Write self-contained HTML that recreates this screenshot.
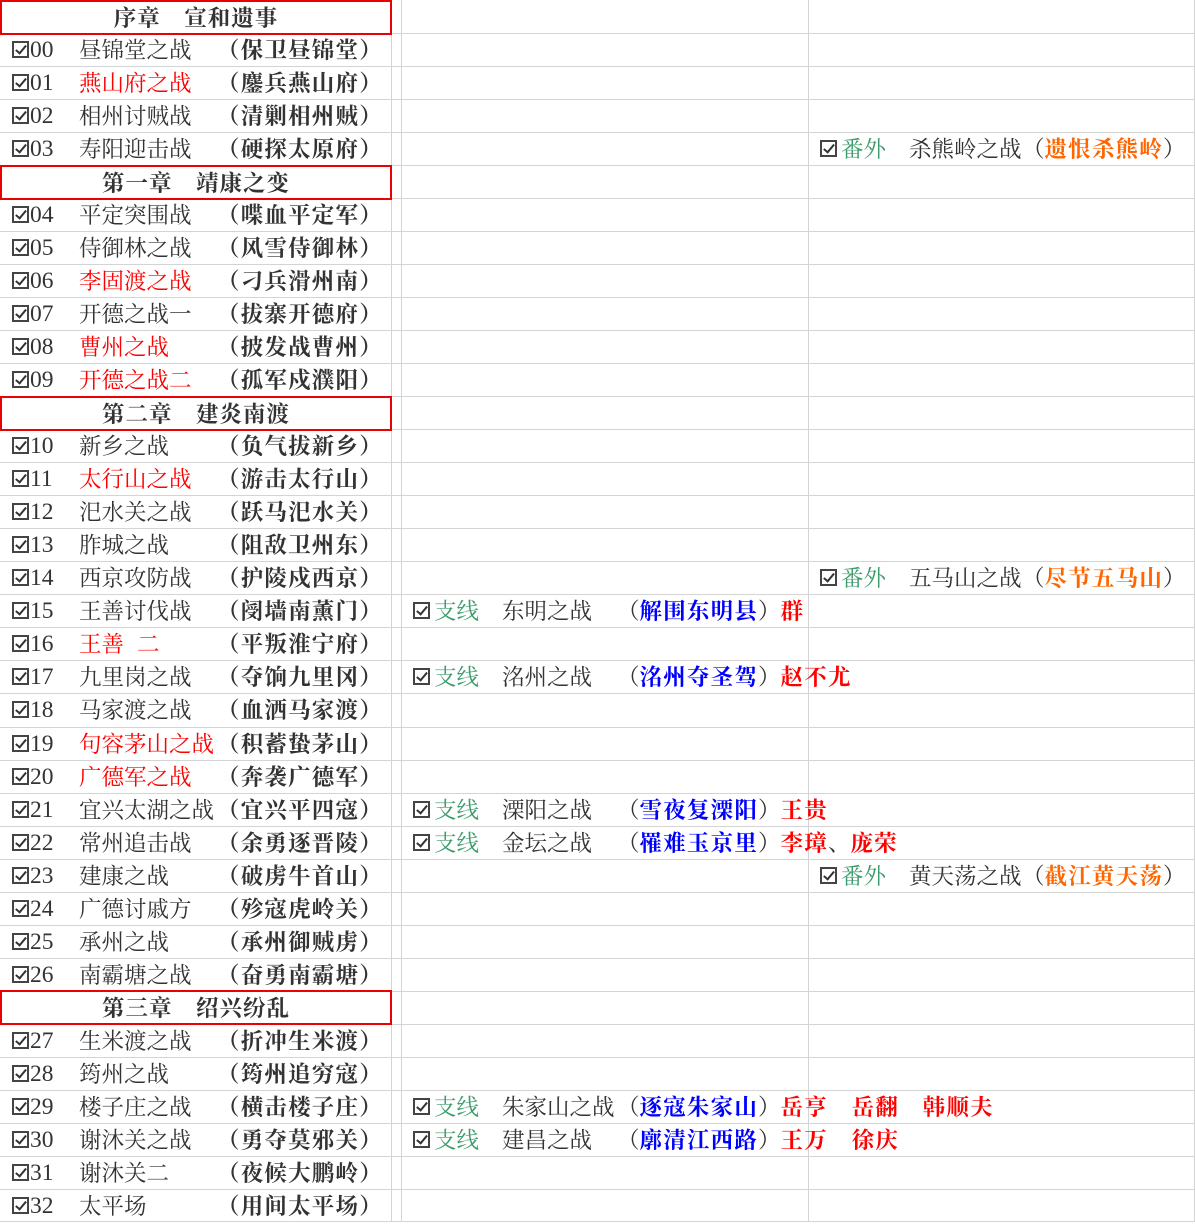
<!DOCTYPE html>
<html><head><meta charset="utf-8">
<style>
html,body{margin:0;padding:0;background:#fff;}
body{width:1195px;height:1222px;position:relative;overflow:hidden;font-family:"Liberation Serif","Noto Serif CJK SC",serif;font-size:22.5px;color:#333;}
.h{position:absolute;left:0;width:1195px;height:1px;background:#d4d4d4;}
.v{position:absolute;top:0;width:1px;height:1222px;background:#d4d4d4;}
.r{position:absolute;left:0;width:1195px;height:33px;line-height:35px;white-space:pre;}
.r span{position:absolute;top:0;}
.r span.cb{display:inline-block;width:17px;height:17px;border:2px solid #444;box-sizing:border-box;top:8px;}
.r span.cb::after{content:"";position:absolute;left:4px;top:0px;width:4px;height:9px;border:solid #333;border-width:0 2px 2px 0;transform:rotate(40deg);}
.a0{left:12px}.a1{left:30px;font-size:23.5px}.a2{left:79px}.a3{left:217px}
.c0{left:413px}.c1{left:434px}.c2{left:502px}.c3{left:617px}
.d0{left:820px}.d1{left:841px}.d2{left:909px}.d3{left:1022px}
.b,b{font-weight:bold;letter-spacing:1.2px}
.red{color:#ff0000}.g{color:#3c9b6b}.bl{color:#0000ff}.or{color:#ff6600}
.box{position:absolute;left:0;width:392px;border:2px solid #ee0000;box-sizing:border-box;height:35px;text-align:center;line-height:34px;font-weight:bold;letter-spacing:1px;background:#fff;}
</style></head><body>
<div class="v" style="left:391px"></div>
<div class="v" style="left:401px"></div>
<div class="v" style="left:808px"></div>
<div class="v" style="left:1194px"></div>
<div class="h" style="top:33px"></div><div class="h" style="top:66px"></div><div class="h" style="top:99px"></div><div class="h" style="top:132px"></div><div class="h" style="top:165px"></div><div class="h" style="top:198px"></div><div class="h" style="top:231px"></div><div class="h" style="top:264px"></div><div class="h" style="top:297px"></div><div class="h" style="top:330px"></div><div class="h" style="top:363px"></div><div class="h" style="top:396px"></div><div class="h" style="top:429px"></div><div class="h" style="top:462px"></div><div class="h" style="top:495px"></div><div class="h" style="top:528px"></div><div class="h" style="top:561px"></div><div class="h" style="top:594px"></div><div class="h" style="top:627px"></div><div class="h" style="top:660px"></div><div class="h" style="top:693px"></div><div class="h" style="top:727px"></div><div class="h" style="top:760px"></div><div class="h" style="top:793px"></div><div class="h" style="top:826px"></div><div class="h" style="top:859px"></div><div class="h" style="top:892px"></div><div class="h" style="top:925px"></div><div class="h" style="top:958px"></div><div class="h" style="top:991px"></div><div class="h" style="top:1024px"></div><div class="h" style="top:1057px"></div><div class="h" style="top:1090px"></div><div class="h" style="top:1123px"></div><div class="h" style="top:1156px"></div><div class="h" style="top:1189px"></div><div class="h" style="top:1221px"></div>

<div class="box" style="top:0px">序章　宣和遗事</div>
<div class="r" style="top:33px"><span class="cb a0"></span><span class="a1">00</span><span class="a2">昼锦堂之战</span><span class="a3 b">（保卫昼锦堂）</span></div>
<div class="r" style="top:66px"><span class="cb a0"></span><span class="a1">01</span><span class="a2 red">燕山府之战</span><span class="a3 b">（鏖兵燕山府）</span></div>
<div class="r" style="top:99px"><span class="cb a0"></span><span class="a1">02</span><span class="a2">相州讨贼战</span><span class="a3 b">（清剿相州贼）</span></div>
<div class="r" style="top:132px"><span class="cb a0"></span><span class="a1">03</span><span class="a2">寿阳迎击战</span><span class="a3 b">（硬探太原府）</span><span class="cb d0"></span><span class="d1 g">番外</span><span class="d2">杀熊岭之战</span><span class="d3">（<b class="or">遗恨杀熊岭</b>）</span></div>
<div class="box" style="top:165px">第一章　靖康之变</div>
<div class="r" style="top:198px"><span class="cb a0"></span><span class="a1">04</span><span class="a2">平定突围战</span><span class="a3 b">（喋血平定军）</span></div>
<div class="r" style="top:231px"><span class="cb a0"></span><span class="a1">05</span><span class="a2">侍御林之战</span><span class="a3 b">（风雪侍御林）</span></div>
<div class="r" style="top:264px"><span class="cb a0"></span><span class="a1">06</span><span class="a2 red">李固渡之战</span><span class="a3 b">（刁兵滑州南）</span></div>
<div class="r" style="top:297px"><span class="cb a0"></span><span class="a1">07</span><span class="a2">开德之战一</span><span class="a3 b">（拔寨开德府）</span></div>
<div class="r" style="top:330px"><span class="cb a0"></span><span class="a1">08</span><span class="a2 red">曹州之战</span><span class="a3 b">（披发战曹州）</span></div>
<div class="r" style="top:363px"><span class="cb a0"></span><span class="a1">09</span><span class="a2 red">开德之战二</span><span class="a3 b">（孤军戍濮阳）</span></div>
<div class="box" style="top:396px">第二章　建炎南渡</div>
<div class="r" style="top:429px"><span class="cb a0"></span><span class="a1">10</span><span class="a2">新乡之战</span><span class="a3 b">（负气拔新乡）</span></div>
<div class="r" style="top:462px"><span class="cb a0"></span><span class="a1">11</span><span class="a2 red">太行山之战</span><span class="a3 b">（游击太行山）</span></div>
<div class="r" style="top:495px"><span class="cb a0"></span><span class="a1">12</span><span class="a2">汜水关之战</span><span class="a3 b">（跃马汜水关）</span></div>
<div class="r" style="top:528px"><span class="cb a0"></span><span class="a1">13</span><span class="a2">胙城之战</span><span class="a3 b">（阻敌卫州东）</span></div>
<div class="r" style="top:561px"><span class="cb a0"></span><span class="a1">14</span><span class="a2">西京攻防战</span><span class="a3 b">（护陵戍西京）</span><span class="cb d0"></span><span class="d1 g">番外</span><span class="d2">五马山之战</span><span class="d3">（<b class="or">尽节五马山</b>）</span></div>
<div class="r" style="top:594px"><span class="cb a0"></span><span class="a1">15</span><span class="a2">王善讨伐战</span><span class="a3 b">（阌墙南薰门）</span><span class="cb c0"></span><span class="c1 g">支线</span><span class="c2">东明之战</span><span class="c3">（<b class="bl">解围东明县</b>）<b class="red">群</b></span></div>
<div class="r" style="top:627px"><span class="cb a0"></span><span class="a1">16</span><span class="a2 red">王善</span><span class="red" style="left:137px">二</span><span class="a3 b">（平叛淮宁府）</span></div>
<div class="r" style="top:660px"><span class="cb a0"></span><span class="a1">17</span><span class="a2">九里岗之战</span><span class="a3 b">（夺饷九里冈）</span><span class="cb c0"></span><span class="c1 g">支线</span><span class="c2">洺州之战</span><span class="c3">（<b class="bl">洺州夺圣驾</b>）<b class="red">赵不尤</b></span></div>
<div class="r" style="top:693px"><span class="cb a0"></span><span class="a1">18</span><span class="a2">马家渡之战</span><span class="a3 b">（血洒马家渡）</span></div>
<div class="r" style="top:727px"><span class="cb a0"></span><span class="a1">19</span><span class="a2 red">句容茅山之战</span><span class="a3 b">（积蓄蛰茅山）</span></div>
<div class="r" style="top:760px"><span class="cb a0"></span><span class="a1">20</span><span class="a2 red">广德军之战</span><span class="a3 b">（奔袭广德军）</span></div>
<div class="r" style="top:793px"><span class="cb a0"></span><span class="a1">21</span><span class="a2">宜兴太湖之战</span><span class="a3 b">（宜兴平四寇）</span><span class="cb c0"></span><span class="c1 g">支线</span><span class="c2">溧阳之战</span><span class="c3">（<b class="bl">雪夜复溧阳</b>）<b class="red">王贵</b></span></div>
<div class="r" style="top:826px"><span class="cb a0"></span><span class="a1">22</span><span class="a2">常州追击战</span><span class="a3 b">（余勇逐晋陵）</span><span class="cb c0"></span><span class="c1 g">支线</span><span class="c2">金坛之战</span><span class="c3">（<b class="bl">罹难玉京里</b>）<b class="red">李璋</b>、<b class="red">庞荣</b></span></div>
<div class="r" style="top:859px"><span class="cb a0"></span><span class="a1">23</span><span class="a2">建康之战</span><span class="a3 b">（破虏牛首山）</span><span class="cb d0"></span><span class="d1 g">番外</span><span class="d2">黄天荡之战</span><span class="d3">（<b class="or">截江黄天荡</b>）</span></div>
<div class="r" style="top:892px"><span class="cb a0"></span><span class="a1">24</span><span class="a2">广德讨戚方</span><span class="a3 b">（殄寇虎岭关）</span></div>
<div class="r" style="top:925px"><span class="cb a0"></span><span class="a1">25</span><span class="a2">承州之战</span><span class="a3 b">（承州御贼虏）</span></div>
<div class="r" style="top:958px"><span class="cb a0"></span><span class="a1">26</span><span class="a2">南霸塘之战</span><span class="a3 b">（奋勇南霸塘）</span></div>
<div class="box" style="top:990px">第三章　绍兴纷乱</div>
<div class="r" style="top:1024px"><span class="cb a0"></span><span class="a1">27</span><span class="a2">生米渡之战</span><span class="a3 b">（折冲生米渡）</span></div>
<div class="r" style="top:1057px"><span class="cb a0"></span><span class="a1">28</span><span class="a2">筠州之战</span><span class="a3 b">（筠州追穷寇）</span></div>
<div class="r" style="top:1090px"><span class="cb a0"></span><span class="a1">29</span><span class="a2">楼子庄之战</span><span class="a3 b">（横击楼子庄）</span><span class="cb c0"></span><span class="c1 g">支线</span><span class="c2">朱家山之战</span><span class="c3">（<b class="bl">逐寇朱家山</b>）<b class="red">岳亨　岳翻　韩顺夫</b></span></div>
<div class="r" style="top:1123px"><span class="cb a0"></span><span class="a1">30</span><span class="a2">谢沐关之战</span><span class="a3 b">（勇夺莫邪关）</span><span class="cb c0"></span><span class="c1 g">支线</span><span class="c2">建昌之战</span><span class="c3">（<b class="bl">廓清江西路</b>）<b class="red">王万　徐庆</b></span></div>
<div class="r" style="top:1156px"><span class="cb a0"></span><span class="a1">31</span><span class="a2">谢沐关二</span><span class="a3 b">（夜候大鹏岭）</span></div>
<div class="r" style="top:1189px"><span class="cb a0"></span><span class="a1">32</span><span class="a2">太平场</span><span class="a3 b">（用间太平场）</span></div>
</body></html>
